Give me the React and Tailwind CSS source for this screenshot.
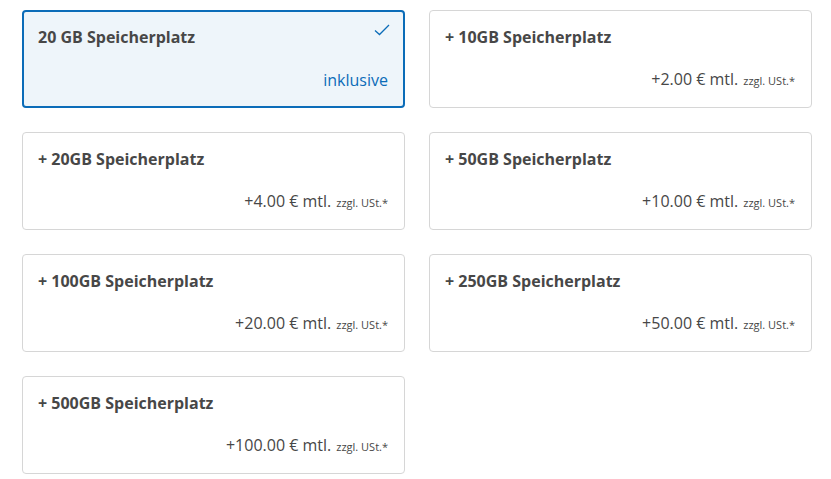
import React from "react";

const items = [
  { title: "20 GB Speicherplatz", selected: true },
  { title: "+ 10GB Speicherplatz", price: "+2.00 € mtl." },
  { title: "+ 20GB Speicherplatz", price: "+4.00 € mtl." },
  { title: "+ 50GB Speicherplatz", price: "+10.00 € mtl." },
  { title: "+ 100GB Speicherplatz", price: "+20.00 € mtl." },
  { title: "+ 250GB Speicherplatz", price: "+50.00 € mtl." },
  { title: "+ 500GB Speicherplatz", price: "+100.00 € mtl." },
];

function Card({ item }) {
  if (item.selected) {
    return (
      <div className="relative h-[98px] rounded-[4px] border-2 border-[#0b6cb8] bg-[#eef5fa] flex flex-col justify-between pl-[14px] pr-[15px] pt-[15px] pb-[16px]">
        <div className="text-[16px] leading-[20px] font-bold text-[#474747]">{item.title}</div>
        <svg className="absolute right-[13px] top-[12px]" width="16" height="12" viewBox="0 0 16 12" fill="none">
          <path d="M1 6.5 L5.5 10.5 L15 1" stroke="#0b6cb8" strokeWidth="1.3" />
        </svg>
        <div className="text-right text-[16px] leading-[20px] text-[#0b6cb8]">inklusive</div>
      </div>
    );
  }
  return (
    <div className="h-[98px] rounded-[4px] border border-[#d6d6d6] bg-white flex flex-col justify-between pl-[15px] pr-[16px] pt-[16px] pb-[16px]">
      <div className="text-[16px] leading-[20px] font-bold text-[#474747]">{item.title}</div>
      <div className="text-right leading-[20px] text-[#474747]">
        <span className="text-[16px]">{item.price}</span>
        <span className="text-[11px] ml-[5px]">zzgl. USt.*</span>
      </div>
    </div>
  );
}

export default function App() {
  return (
    <div className="bg-white min-h-[479px] pt-[10px] pl-[22px]" style={{ fontFamily: '"Open Sans", sans-serif' }}>
      <div className="w-[790px] grid grid-cols-2 gap-x-6 gap-y-6">
        {items.map((it, i) => (
          <Card key={i} item={it} />
        ))}
      </div>
    </div>
  );
}
